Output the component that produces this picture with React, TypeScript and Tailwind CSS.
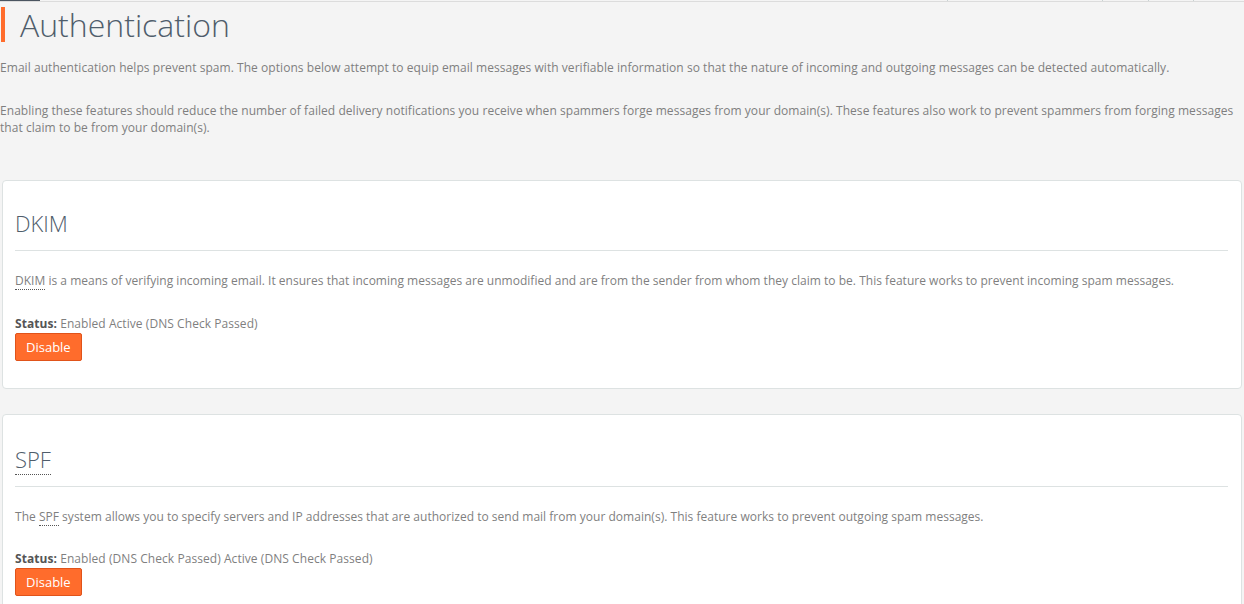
import React from "react";

function Abbr({ children, title, className = "" }: { children: React.ReactNode; title: string; className?: string }) {
  return (
    <abbr title={title} className={`no-underline border-b border-dotted border-[#555] cursor-help ${className}`}>
      {children}
    </abbr>
  );
}

function DisableButton() {
  return (
    <button className="h-[28px] px-[10px] bg-[#ff6c2c] border border-[#e0531a] rounded-[2px] text-white text-[13px] leading-none">
      Disable
    </button>
  );
}

interface CardProps {
  heading: React.ReactNode;
  description: React.ReactNode;
  status: string;
  roomy?: boolean;
}

function FeatureCard({ heading, description, status, roomy }: CardProps) {
  return (
    <section
      className={`mx-[2px] bg-white border border-[#dde2e2] rounded-[4px] pb-[27px] pl-[12px] pr-[13px] ${
        roomy ? "pt-[29px]" : "pt-[27px]"
      }`}
    >
      <h2 className="text-[22px] font-light leading-[30px] text-[#4f5d6b]">{heading}</h2>
      <hr className="mt-[12px] border-0 border-t border-[#dde2e2]" />
      <p className="mt-[21px] text-[12px] leading-[17px] tracking-[0.02px] text-[#7f7f7f]">{description}</p>
      <p className={`${roomy ? "mt-[25px]" : "mt-[26px]"} text-[12px] leading-[17px] tracking-[0.06px] text-[#7f7f7f]`}>
        <span className="font-bold text-[#555]">Status:</span> {status}
      </p>
      <div className="mt-[1px]">
        <DisableButton />
      </div>
    </section>
  );
}

export default function App() {
  return (
    <div className="min-h-screen bg-[#f4f4f4] font-['Open_Sans',sans-serif] overflow-hidden">
      {/* top tab strip remnant */}
      <div className="relative h-[2px]">
        <div className="h-px w-[40px] bg-[#4b5561]" />
        <div className="h-px bg-[#dcdcdc]" />
        <span className="absolute top-0 left-[947px] w-px h-px bg-[#c9d3d3]" />
        <span className="absolute top-0 left-[1102px] w-px h-px bg-[#c9d3d3]" />
        <span className="absolute top-0 left-[1148px] w-px h-px bg-[#c9d3d3]" />
        <span className="absolute top-0 left-[1193px] w-px h-px bg-[#c9d3d3]" />
      </div>

      <div className="mt-[5px] flex items-center">
        <div className="ml-[1px] w-[4px] h-[35px] bg-[#ff6c2c]" />
        <h1 className="ml-[15px] text-[32px] font-light leading-[35px] text-[#4f5d6b]">Authentication</h1>
      </div>

      <div className="pr-[6px] text-[12px] leading-[17px] tracking-[0.05px] text-[#7f7f7f]">
        <p className="mt-[17px]">
          Email authentication helps prevent spam. The options below attempt to equip email messages with verifiable
          information so that the nature of incoming and outgoing messages can be detected automatically.
        </p>
        <p className="mt-[26px]">
          Enabling these features should reduce the number of failed delivery notifications you receive when spammers
          forge messages from your domain(s). These features also work to prevent spammers from forging messages that
          claim to be from your domain(s).
        </p>
      </div>

      <div className="mt-[44px] flex flex-col gap-[25px]">
        <FeatureCard
          heading="DKIM"
          description={
            <>
              <Abbr title="DomainKeys Identified Mail">DKIM</Abbr> is a means of verifying incoming email. It ensures
              that incoming messages are unmodified and are from the sender from whom they claim to be. This feature
              works to prevent incoming spam messages.
            </>
          }
          status="Enabled Active (DNS Check Passed)"
        />
        <FeatureCard
          roomy
          heading={<Abbr title="Sender Policy Framework">SPF</Abbr>}
          description={
            <>
              The <Abbr title="Sender Policy Framework">SPF</Abbr> system allows you to specify servers and IP
              addresses that are authorized to send mail from your domain(s). This feature works to prevent outgoing
              spam messages.
            </>
          }
          status="Enabled (DNS Check Passed) Active (DNS Check Passed)"
        />
      </div>
    </div>
  );
}
